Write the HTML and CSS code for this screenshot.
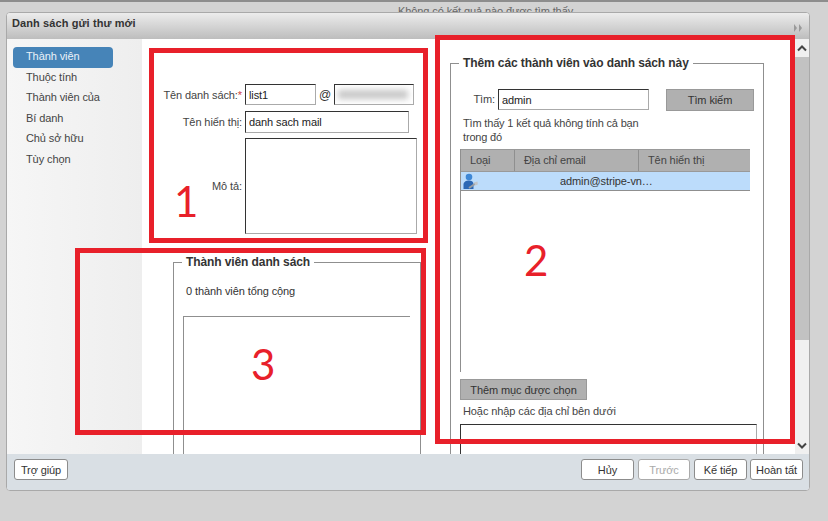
FILE: index.html
```html
<!DOCTYPE html>
<html lang="vi">
<head>
<meta charset="utf-8">
<title>Danh sách gửi thư mới</title>
<link rel="stylesheet" href="styles.css">
</head>
<body>
<div class="notice">Không có kết quả nào được tìm thấy</div>
<section class="dialog">
  <header class="titlebar">
    <span class="title">Danh sách gửi thư mới</span>
    <svg class="collapse" width="10" height="8" viewBox="0 0 10 8"><path d="M1 0l3 4-3 4zM6 0l3 4-3 4z"/></svg>
  </header>
  <div class="main">
    <nav class="sidebar">
      <a class="nav-item active">Thành viên</a>
      <a class="nav-item">Thuộc tính</a>
      <a class="nav-item">Thành viên của</a>
      <a class="nav-item">Bí danh</a>
      <a class="nav-item">Chủ sở hữu</a>
      <a class="nav-item">Tùy chọn</a>
    </nav>
    <div class="content">
      <div class="col-left">
        <div class="form-row row-name">
          <label class="label">Tên danh sách:<span class="req">*</span></label>
          <input class="input input-list" value="list1">
          <span class="at">@</span>
          <div class="input input-domain"><span class="blur"></span></div>
        </div>
        <div class="form-row row-display">
          <label class="label">Tên hiển thị:</label>
          <input class="input input-display" value="danh sach mail">
        </div>
        <div class="form-row row-desc">
          <label class="label">Mô tả:</label>
          <textarea class="input input-desc"></textarea>
        </div>
        <fieldset class="group group-members">
          <legend>Thành viên danh sách</legend>
          <p class="count">0 thành viên tổng cộng</p>
          <div class="member-box"></div>
        </fieldset>
      </div>
      <div class="col-right">
        <fieldset class="group group-add">
          <legend>Thêm các thành viên vào danh sách này</legend>
          <div class="search-row">
            <label class="search-label">Tìm:</label>
            <input class="input input-search" value="admin">
            <button class="grey-btn search-btn">Tìm kiếm</button>
          </div>
          <p class="result">Tìm thấy 1 kết quả không tính cả bạn<br>trong đó</p>
          <div class="table">
            <div class="thead">
              <span class="th th-type">Loại</span>
              <span class="th th-email">Địa chỉ email</span>
              <span class="th th-name">Tên hiển thị</span>
            </div>
            <div class="tr">
              <span class="td-type">
                <svg width="15" height="17" viewBox="0 0 15 17">
                  <circle cx="6" cy="4" r="3.300" fill="#3f88d6"/>
                  <path d="M0.500 16V11.500C0.500 9 3 7.500 6 7.500s4.500 1.500 4.500 4V16z" fill="#2b67b4"/>
                  <path d="M6 15l6.500-4.500" stroke="#9a9ea3" stroke-width="2"/>
                  <path d="M11 9.500l3.500-1 0.300 3-2.500 1z" fill="#c3c6c9"/>
                </svg>
              </span>
              <span class="td-email">admin@stripe-vn…</span>
            </div>
            <div class="tbody"></div>
          </div>
          <button class="grey-btn add-btn">Thêm mục được chọn</button>
          <p class="or">Hoặc nhập các địa chỉ bên dưới</p>
          <div class="input address-box"></div>
        </fieldset>
      </div>
    </div>
    <div class="scrollbar">
      <svg class="arrow arrow-up" width="10" height="7" viewBox="0 0 10 7"><path d="M1 5.500l4-4 4 4" fill="none" stroke="#444" stroke-width="2"/></svg>
      <div class="thumb"></div>
      <div class="track"></div>
      <svg class="arrow" width="10" height="7" viewBox="0 0 10 7"><path d="M1 1.500l4 4 4-4" fill="none" stroke="#444" stroke-width="2"/></svg>
    </div>
  </div>
  <footer class="footer">
    <button class="btn btn-help">Trợ giúp</button>
    <div class="footer-right">
      <button class="btn btn-cancel">Hủy</button>
      <button class="btn btn-prev" disabled>Trước</button>
      <button class="btn btn-next">Kế tiếp</button>
      <button class="btn btn-finish">Hoàn tất</button>
    </div>
  </footer>
</section>
<div class="mark mark-1"><span class="digit digit-1">1</span></div>
<div class="mark mark-2"><span class="digit digit-2">2</span></div>
<div class="mark mark-3"><span class="digit digit-3">3</span></div>
</body>
</html>
```

FILE: styles.css
```css
* { box-sizing: border-box; }
html, body { margin: 0; height: 100%; }
body {
  position: relative;
  width: 828px;
  height: 521px;
  overflow: hidden;
  background: #d3d3d3;
  border-top: 2px solid #8d8d8d;
  font: 11px/14px "Liberation Sans", Arial, sans-serif;
  letter-spacing: -0.1px;
  color: #333;
}
.notice {
  padding-top: 2px;
  padding-left: 398px;
  color: #666;
}
.dialog {
  position: absolute;
  left: 6px;
  top: 10px;
  width: 804px;
  height: 479px;
  display: flex;
  flex-direction: column;
  background: #fff;
  border: 1px solid #a9a9a9;
  border-radius: 4px;
  overflow: hidden;
}
.titlebar {
  flex: none;
  height: 26px;
  display: flex;
  align-items: center;
  justify-content: space-between;
  padding: 0 6px 6px 5px;
  background: linear-gradient(#ececec, #bdbdbd);
}
.title { font-weight: bold; color: #333; letter-spacing: 0.1px; }
.collapse { fill: #9a9a9a; margin-top: 9px; }
.main { flex: 1; min-height: 0; display: flex; }
.sidebar {
  flex: none;
  width: 135px;
  padding: 8px 6px;
  background: linear-gradient(90deg, #f6f6f6, #eeeeee);
}
.nav-item {
  display: block;
  width: 100px;
  height: 20.6px;
  line-height: 18.5px;
  padding-left: 13px;
  color: #444;
  border-radius: 4px;
}
.nav-item.active { background: #4684b8; color: #eaf2f8; }
.content { flex: 1; min-width: 0; display: flex; overflow: hidden; background: #fff; }
.col-left { flex: none; width: 308px; padding-top: 45px; }
.form-row { display: flex; align-items: center; }
.label { flex: none; width: 100px; text-align: right; color: #444; margin-right: 3px; }
.row-name { height: 21px; }
.row-display { height: 22px; margin-top: 6px; }
.row-desc { height: 96px; margin-top: 5px; }
.req { color: #d04040; }
.input {
  display: block;
  margin: 0;
  padding: 0 3px;
  background: #fff;
  border: 1px solid;
  border-color: #333 #aaa #aaa #333;
  border-radius: 0;
  font: 11px "Liberation Sans", Arial, sans-serif;
  letter-spacing: -0.1px;
  color: #222;
  outline: none;
  resize: none;
}
.input-list { width: 71px; height: 21px; }
.at { width: 18px; text-align: center; font-size: 12px; }
.input-domain { width: 80px; height: 21px; overflow: hidden; display: flex; align-items: center; }
.blur { display: block; width: 70px; height: 9px; background: #c6c6c6; filter: blur(3px); }
.input-display { width: 164px; height: 22px; }
.input-desc { width: 172px; height: 96px; }
.group {
  margin: 0;
  padding: 0;
  border: 1px solid #8f8f8f;
  min-width: 0;
}
.group legend {
  margin-left: 8px;
  padding: 0 4px;
  font-size: 12px;
  line-height: 14px;
  font-weight: bold;
  color: #333;
}
.group-members { margin: 21px 0 0 31px; width: 248px; height: 300px; }
.count { margin: 15px 0 0 12px; }
.member-box {
  margin: 18px 0 0 9px;
  width: 227px;
  height: 300px;
  border-top: 1px solid #8f8f8f;
  border-left: 1px solid #8f8f8f;
}
.col-right { flex: none; padding-left: 0; padding-top: 17px; }
.group-add { width: 314px; height: 500px; }
.search-row { display: flex; align-items: flex-start; margin-top: 19px; }
.search-label { width: 44px; text-align: right; margin-right: 3px; line-height: 21px; color: #444; }
.input-search { width: 151px; height: 21px; }
.grey-btn {
  display: block;
  margin: 0;
  padding: 0;
  background: #b0b0b0;
  border: 1px solid #999;
  font: inherit;
  letter-spacing: inherit;
  color: #333;
}
.search-btn { width: 88px; height: 22px; margin-left: 17px; }
.result { margin: 5px 0 0 12px; width: 200px; color: #444; letter-spacing: -0.17px; }
.table { margin: 5px 0 0 9px; width: 290px; height: 223px; border-left: 1px solid #8f8f8f; }
.thead { display: flex; height: 23px; background: #b0b0b0; align-items: center; border-top: 1px solid #999; border-bottom: 1px solid #999; }
.th { height: 100%; line-height: 21px; color: #444; padding-left: 9px; }
.th-type { width: 54px; border-right: 1px solid #8f8f8f; }
.th-email { width: 124px; border-right: 1px solid #8f8f8f; }
.tr { display: flex; align-items: center; height: 19px; background: #bcdcfb; border-bottom: 1px solid #8f8f8f; }
.td-type { width: 99px; padding-left: 2px; height: 17px; }
.td-email { color: #333; }
.add-btn { margin: 7px 0 0 9px; width: 127px; height: 21px; }
.or { margin: 4px 0 0 12px; color: #444; }
.address-box { margin: 6px 0 0 9px; width: 297px; height: 100px; }
.scrollbar { flex: none; width: 14px; display: flex; flex-direction: column; align-items: center; background: #f0f0f0; }
.arrow { flex: none; margin: 5px 0; }
.arrow-up { margin-top: 6px; }
.thumb { flex: none; width: 100%; height: 283px; background: #c2c2c2; }
.track { flex: 1; width: 100%; }
.footer {
  flex: none;
  height: 36px;
  display: flex;
  align-items: flex-start;
  justify-content: space-between;
  padding: 5px 6px 0 7px;
  background: #d9dfe4;
}
.footer-right { display: flex; }
.btn {
  height: 21px;
  padding: 0;
  background: #fff;
  border: 1px solid #8c8c8c;
  border-radius: 3px;
  font: inherit;
  letter-spacing: inherit;
  color: #333;
}
.btn-help { width: 54px; }
.btn-cancel { width: 53px; }
.btn-prev { width: 52px; margin-left: 4px; color: #aaa; border-color: #aaa; }
.btn-next { width: 53px; margin-left: 4px; }
.btn-finish { width: 53px; margin-left: 3px; }
.mark { position: absolute; border: 5px solid #e8202a; }
.mark-1 { left: 149px; top: 46px; width: 279px; height: 195px; }
.mark-2 { left: 435px; top: 33px; width: 360px; height: 409px; }
.mark-3 { left: 75px; top: 246px; width: 351px; height: 187px; }
.digit {
  position: absolute;
  font: 42px/42px Lato, "Liberation Sans", sans-serif;
  letter-spacing: 0;
  color: #e8202a;
}
.digit-1 { left: 20px; top: 127px; }
.digit-2 { left: 84px; top: 199px; }
.digit-3 { left: 171px; top: 90px; }
```
